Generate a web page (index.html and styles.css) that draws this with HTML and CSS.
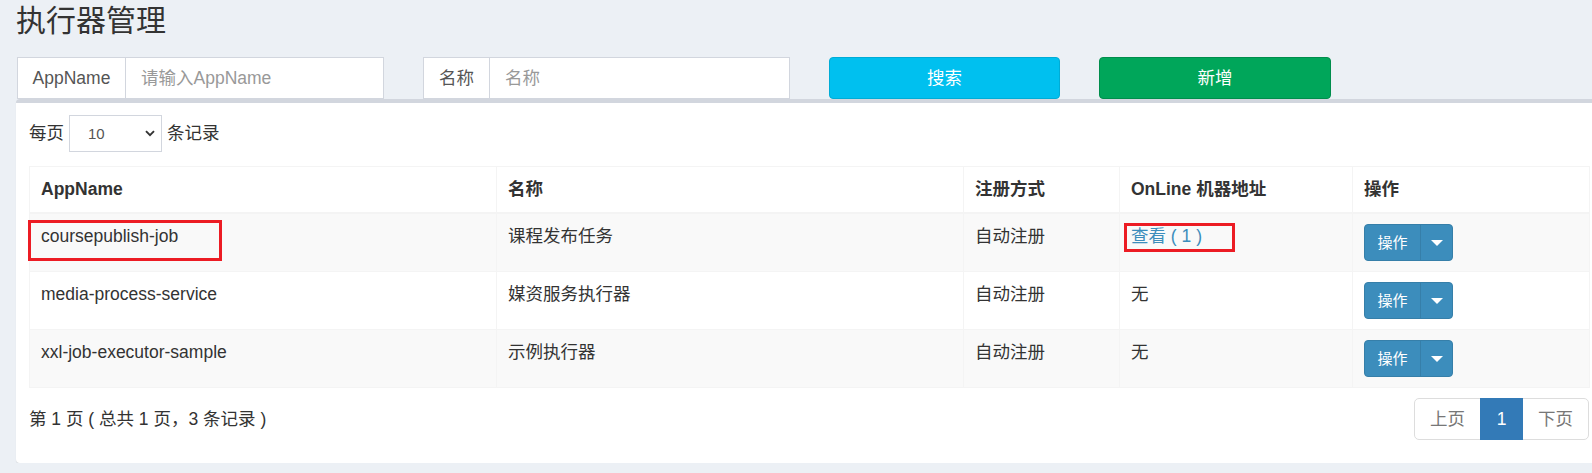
FILE: index.html
```html
<!DOCTYPE html>
<html lang="zh-CN">
<head>
<meta charset="utf-8">
<title>执行器管理</title>
<link rel="stylesheet" href="styles.css">
</head>
<body>
<div class="page">
  <header class="content-header">
    <h1 class="title">执行器管理</h1>
  </header>

  <div class="toolbar">
    <div class="input-group">
      <span class="addon addon-app">AppName</span>
      <input class="field" type="text" placeholder="请输入AppName">
    </div>
    <div class="input-group">
      <span class="addon addon-name">名称</span>
      <input class="field" type="text" placeholder="名称">
    </div>
    <button class="btn btn-info" type="button">搜索</button>
    <button class="btn btn-success" type="button">新增</button>
  </div>

  <section class="box">
    <div class="length-row">
      <span>每页</span>
      <div class="fake-select">
        <span>10</span>
        <svg class="chev" width="10" height="7" viewBox="0 0 10 7"><path d="M1 1.2 L5 5.2 L9 1.2" fill="none" stroke="#333" stroke-width="1.9"/></svg>
      </div>
      <span>条记录</span>
    </div>

    <table class="grid">
      <colgroup>
        <col class="c1"><col class="c2"><col class="c3"><col class="c4"><col class="c5">
      </colgroup>
      <thead>
        <tr>
          <th>AppName</th>
          <th>名称</th>
          <th>注册方式</th>
          <th>OnLine 机器地址</th>
          <th>操作</th>
        </tr>
      </thead>
      <tbody>
        <tr class="odd">
          <td class="marked">coursepublish-job<span class="mark mark-a"></span></td>
          <td>课程发布任务</td>
          <td>自动注册</td>
          <td class="marked"><a class="link" href="#">查看 ( 1 )</a><span class="mark mark-b"></span></td>
          <td><div class="split"><span class="split-main">操作</span><span class="split-toggle"><i class="caret"></i></span></div></td>
        </tr>
        <tr>
          <td>media-process-service</td>
          <td>媒资服务执行器</td>
          <td>自动注册</td>
          <td>无</td>
          <td><div class="split"><span class="split-main">操作</span><span class="split-toggle"><i class="caret"></i></span></div></td>
        </tr>
        <tr class="odd">
          <td>xxl-job-executor-sample</td>
          <td>示例执行器</td>
          <td>自动注册</td>
          <td>无</td>
          <td><div class="split"><span class="split-main">操作</span><span class="split-toggle"><i class="caret"></i></span></div></td>
        </tr>
      </tbody>
    </table>

    <div class="footer-row">
      <div class="info">第 1 页 ( 总共 1 页，3 条记录 )</div>
      <ul class="pagination">
        <li class="pg disabled">上页</li>
        <li class="pg active">1</li>
        <li class="pg disabled">下页</li>
      </ul>
    </div>
  </section>
</div>
</body>
</html>
```

FILE: styles.css
```css
html, body {
  margin: 0;
  padding: 0;
  overflow: hidden;
}
body {
  background: #ecf0f5;
  color: #333;
  font-family: "Liberation Sans", Arial, "Noto Sans CJK SC", sans-serif;
  font-size: 17.5px;
  line-height: 25px;
}
.page {
  width: 1620px;
}
.content-header {
  padding: 3px 16px 0;
}
.title {
  margin: 0;
  font-size: 30px;
  line-height: 36px;
  font-weight: 400;
  color: #333;
}

/* toolbar */
.toolbar {
  display: flex;
  gap: 39px;
  margin-top: 18px;
  padding-left: 17px;
  height: 42px;
}
.input-group {
  display: flex;
  width: 367px;
  height: 42px;
  box-sizing: border-box;
}
.addon {
  display: flex;
  align-items: center;
  justify-content: center;
  white-space: nowrap;
  border: 1px solid #d2d6de;
  background: #fff;
  color: #555;
  box-sizing: border-box;
  flex: none;
}
.addon-app { width: 109px; }
.addon-name { width: 67px; }
.field {
  flex: 1;
  min-width: 0;
  border: 1px solid #d2d6de;
  border-left: 0;
  padding: 0 15px;
  font: inherit;
  color: #555;
  background: #fff;
  outline: none;
}
.field::placeholder {
  color: #999;
}
.btn {
  width: 231px;
  height: 42px;
  border-radius: 4px;
  font: inherit;
  color: #fff;
  cursor: pointer;
  flex: none;
}
.btn-info {
  background: #00c0ef;
  border: 1px solid #00acd6;
}
.btn-success {
  background: #00a65a;
  border: 1px solid #008d4c;
  width: 232px;
}

/* box */
.box {
  margin-left: 16px;
  width: 1586px;
  box-sizing: border-box;
  background: #fff;
  border-top: 4px solid #d2d6de;
  border-radius: 4px;
  box-shadow: 0 1px 1px rgba(0, 0, 0, 0.1);
  padding: 12px 12px 12px 13px;
}
.length-row {
  display: flex;
  align-items: center;
  gap: 5px;
  height: 37px;
}
.fake-select {
  display: flex;
  align-items: center;
  justify-content: space-between;
  width: 93px;
  height: 37px;
  box-sizing: border-box;
  border: 1px solid #d2d6de;
  padding: 0 6px 0 18px;
  font-size: 15px;
  color: #555;
}
.chev {
  display: block;
}

/* table */
.grid {
  margin-top: 14px;
  width: 1560px;
  table-layout: fixed;
  border-collapse: collapse;
  border: 1px solid #f4f4f4;
}
.c1 { width: 467px; }
.c2 { width: 467px; }
.c3 { width: 156px; }
.c4 { width: 233px; }
.c5 { width: 237px; }
.grid th,
.grid td {
  border: 1px solid #f4f4f4;
  padding: 10px 11px;
  text-align: left;
  vertical-align: top;
  line-height: 25px;
}
.grid th {
  font-weight: 700;
  border-bottom: 2px solid #f4f4f4;
  background: #fff;
}
.grid tr.odd td {
  background: #f9f9f9;
}
.marked {
  position: relative;
}
.mark {
  position: absolute;
  border: 3px solid #ec1c24;
  box-sizing: border-box;
  pointer-events: none;
}
.mark-a {
  left: -2px;
  top: 6px;
  width: 194px;
  height: 41px;
}
.mark-b {
  left: 4px;
  top: 9px;
  width: 111px;
  height: 29px;
}
.link {
  color: #3c8dbc;
  text-decoration: none;
}

/* split button */
.split {
  display: inline-flex;
  height: 37px;
  border-radius: 4px;
  overflow: hidden;
  background: #3c8dbc;
  border: 1px solid #367fa9;
  box-sizing: border-box;
  color: #fff;
  font-size: 15px;
}
.split-main {
  display: flex;
  align-items: center;
  padding: 0 12px;
  width: 55px;
  box-sizing: border-box;
  justify-content: center;
}
.split-toggle {
  display: flex;
  align-items: center;
  justify-content: center;
  width: 31px;
  border-left: 1px solid #367fa9;
}
.caret {
  display: block;
  width: 0;
  height: 0;
  border-top: 6px solid #fff;
  border-left: 6px solid transparent;
  border-right: 6px solid transparent;
}

/* footer */
.footer-row {
  display: flex;
  justify-content: space-between;
  align-items: center;
  width: 1560px;
  margin-top: 10px;
  margin-bottom: 11px;
}
.info {
  line-height: 25px;
}
.pagination {
  display: flex;
  list-style: none;
  margin: 0;
  padding: 0;
}
.pg {
  height: 42px;
  box-sizing: border-box;
  padding: 8px 15px;
  border: 1px solid #ddd;
  margin-left: -1px;
  background: #fff;
  color: #777;
  line-height: 25px;
}
.pg:first-child {
  border-radius: 5px 0 0 5px;
  margin-left: 0;
}
.pg:last-child {
  border-radius: 0 5px 5px 0;
}
.pg.active {
  background: #337ab7;
  border-color: #337ab7;
  color: #fff;
  width: 43px;
  text-align: center;
  padding: 8px 0;
  position: relative;
}
```
